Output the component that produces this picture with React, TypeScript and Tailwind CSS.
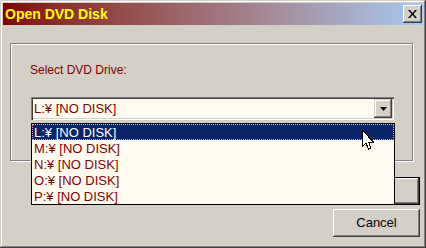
import { useState } from 'react'

const drives = ['L', 'M', 'N', 'O', 'P']

export default function App() {
  const [selected] = useState(0)

  return (
    <div className="w-[426px] h-[248px] bg-[#d4d0c8] p-[3px] flex flex-col relative shadow-[inset_-1px_-1px_#404040,inset_1px_1px_#d4d0c8,inset_-2px_-2px_#808080,inset_2px_2px_#fff] font-['Liberation_Sans',Arial,sans-serif]">
      {/* title bar */}
      <div className="h-[22px] flex items-center justify-between bg-gradient-to-r from-[#800000] to-[#a6caf0] pl-[2px] pr-[1px]">
        <span className="text-[14px] font-bold text-[#ffff00] leading-none">Open DVD Disk</span>
        <button className="w-[19px] h-[18px] bg-[#d4d0c8] flex items-center justify-center shadow-[inset_-1px_-1px_#404040,inset_1px_1px_#fff,inset_-2px_-2px_#808080]">
          <svg width="9" height="8" viewBox="0 0 9 8">
            <path d="M0 0h2l2.5 3 2.5-3h2L5.5 4 9 8H7L4.5 5 2 8H0l3.5-4z" fill="#000" />
          </svg>
        </button>
      </div>

      <div className="flex-1 flex flex-col pl-[7px] pr-[3px] pt-[18px]">
        {/* group box */}
        <div className="w-[403px] h-[118px] border border-[#808080] shadow-[inset_1px_1px_#fff,1px_1px_#fff] pl-[19px] pt-[19px]">
          <div className="text-[12px] text-[#800000] leading-[14px]">Select DVD Drive:</div>
          <div className="mt-[20px] ml-[1px] w-[363px] h-[23px] bg-[#fffbf0] flex items-center shadow-[inset_1px_1px_#808080,inset_2px_2px_#404040,inset_-1px_-1px_#fff,inset_-2px_-2px_#d4d0c8] pl-[2px] pr-[2px]">
            <span className="flex-1 pl-[1px] text-[13px] text-[#800000] leading-none">L:¥ [NO DISK]</span>
            <div className="w-[18px] h-[19px] bg-[#d4d0c8] flex items-center justify-center shadow-[inset_-1px_-1px_#404040,inset_1px_1px_#d4d0c8,inset_-2px_-2px_#808080,inset_2px_2px_#fff]">
              <svg width="7" height="4" viewBox="0 0 7 4">
                <path d="M0 0h7L3.5 4z" fill="#000" />
              </svg>
            </div>
          </div>
        </div>

        {/* buttons */}
        <div className="flex flex-col items-end gap-[4px] mt-[16px]">
          <button className="w-[87px] h-[28px] bg-[#d4d0c8] border border-black shadow-[inset_-1px_-1px_#404040,inset_1px_1px_#fff,inset_-2px_-2px_#808080] text-[13px] text-black">
            OK
          </button>
          <button className="w-[87px] h-[28px] bg-[#d4d0c8] shadow-[inset_-1px_-1px_#404040,inset_1px_1px_#fff,inset_-2px_-2px_#808080] text-[13px] text-black">
            Cancel
          </button>
        </div>
      </div>

      {/* open dropdown list */}
      <div className="absolute left-[31px] top-[123px] w-[364px] bg-[#fffbf0] border border-black">
        {drives.map((d, i) => (
          <div
            key={d}
            className={`h-[16px] flex items-center pl-[1px] text-[13px] leading-none ${
              i === selected
                ? 'bg-[#0a246a] text-white border border-dotted border-[#ff9c9c]'
                : 'text-[#800000] border border-transparent'
            }`}
          >
            {d}:¥ [NO DISK]
          </div>
        ))}
      </div>

      {/* mouse pointer */}
      <svg className="absolute left-[362px] top-[130px]" width="12" height="21" viewBox="0 0 12 21">
        <path
          d="M0.5 0.5v16l3.5-3.5 2.5 6 2.5-1-2.5-6h5z"
          fill="#fff"
          stroke="#000"
          strokeWidth="1"
          shapeRendering="crispEdges"
        />
      </svg>
    </div>
  )
}
